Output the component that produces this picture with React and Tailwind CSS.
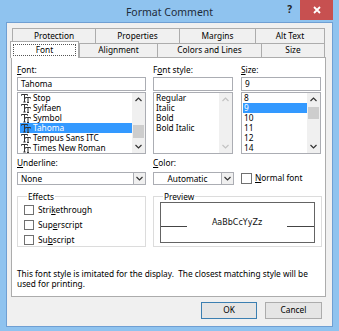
import React from "react";

const TT = () => (
  <svg width="10" height="9" viewBox="0 0 10 9" className="shrink-0">
    <path d="M0.5 0.5h6M0.5 0.5v1.2M6.5 0.5v1.2M3.5 0.5v7.5M2.3 8h2.4" stroke="#333" strokeWidth="1" fill="none" />
    <path d="M4.5 3.5h5M4.5 3.5v1M9.5 3.5v1M7 3.5v5M6 8.5h2" stroke="#333" strokeWidth="1" fill="none" />
  </svg>
);

const Chev = ({ up, color = "#333" }) => (
  <svg width="7" height="5" viewBox="0 0 7 5">
    <path d={up ? "M0.5 4L3.5 1L6.5 4" : "M0.5 1L3.5 4L6.5 1"} stroke={color} strokeWidth="1.2" fill="none" />
  </svg>
);

const Scroll = ({ thumbTop, thumbH, disabled }) => (
  <div className="w-[13px] h-full bg-[#f0f0f0] flex flex-col items-center">
    <div className="h-[11px] w-full flex items-center justify-center mt-[1px]">
      <Chev up color={disabled ? "#c2c2c2" : "#333"} />
    </div>
    {thumbH ? (
      <div className="w-full flex-1 flex flex-col">
        <div style={{ height: thumbTop }} />
        <div className="w-[11px] mx-auto bg-[#cdcdcd]" style={{ height: thumbH }} />
      </div>
    ) : (
      <div className="flex-1" />
    )}
    <div className="h-[11px] w-full flex items-center justify-center mb-[1px]">
      <Chev color={disabled ? "#c2c2c2" : "#333"} />
    </div>
  </div>
);

const Label = ({ pre, u, post }) => (
  <div className="h-[12px] leading-[12px] text-[#000]">
    {pre}
    <span className="underline underline-offset-[1px]">{u}</span>
    {post}
  </div>
);

const Tab = ({ children, w, last }) => (
  <div
    className={`h-full flex items-center justify-center bg-[#f0f0f0] border-t border-l border-[#acacac] ${last ? "border-r" : ""}`}
    style={{ width: w }}
  >
    {children}
  </div>
);

const Check = ({ pre, u, post }) => (
  <div className="flex items-center h-[10px] gap-[4px]">
    <div className="w-[10px] h-[10px] border border-[#707070] bg-white shrink-0" />
    <span className="leading-[10px]">
      {pre}
      <span className="underline underline-offset-[1px]">{u}</span>
      {post}
    </span>
  </div>
);

export default function App() {
  const fonts = ["Stop", "Sylfaen", "Symbol", "Tahoma", "Tempus Sans ITC", "Times New Roman"];
  const styles = ["Regular", "Italic", "Bold", "Bold Italic"];
  const sizes = ["8", "9", "10", "11", "12", "14"];
  return (
    <div className="w-[339px] h-[331px] bg-[#8fc3ef] flex flex-col overflow-hidden font-['Noto_Sans',sans-serif] text-[8.3px] text-black">
      {/* title bar */}
      <div className="h-[22px] grid grid-cols-[1fr_auto_1fr] shrink-0">
        <div />
        <div className="text-[10.5px] text-[#1e2b3a] leading-[22px] pt-[1px]">Format Comment</div>
        <div className="flex justify-end items-start pr-[6px]">
          <div className="text-[10px] font-bold text-[#222] mt-[2px] mr-[8px] leading-[14px]">?</div>
          <div className="w-[33px] h-[20px] bg-[#c75050] flex items-center justify-center">
            <svg width="8" height="8" viewBox="0 0 8 8">
              <path d="M1 1L7 7M7 1L1 7" stroke="#fff" strokeWidth="1.8" />
            </svg>
          </div>
        </div>
      </div>
      {/* content */}
      <div className="mx-[6px] h-[305px] border border-[#6f9fd3] bg-[#f0f0f0] pl-[4px] pr-[6px] pt-[5px] flex flex-col">
        {/* tabs */}
        <div className="mx-[1px] h-[15px] flex">
          <Tab w={83}>Protection</Tab>
          <Tab w={84}>Properties</Tab>
          <Tab w={76}>Margins</Tab>
          <Tab w={70} last>Alt Text</Tab>
        </div>
        <div className="mx-[1px] h-[14px] flex">
          <div className="relative z-10 -ml-[2px] -mt-[2px] w-[69px] h-[17px] bg-white border border-b-0 border-[#acacac] flex items-center justify-center p-[2px]">
            <div className="w-full h-full border border-dotted border-[#555] flex items-center justify-center">Font</div>
          </div>
          <Tab w={78}>Alignment</Tab>
          <Tab w={104}>Colors and Lines</Tab>
          <Tab w={64} last>Size</Tab>
        </div>
        {/* panel */}
        <div className="h-[240px] bg-white border border-[#acacac] pl-[5px] pr-[3px] pt-[6px] flex flex-col">
          <div className="grid grid-cols-[129px_80px_81px] gap-x-[7px]">
            {/* col1 */}
            <div className="flex flex-col">
              <Label u="F" post="ont:" />
              <div className="mt-[1px] h-[14px] border border-[#abadb3] pl-[3px] leading-[12px]">Tahoma</div>
              <div className="mt-[1px] h-[62px] border border-[#abadb3] flex">
                <div className="flex-1 pt-[0px] pl-[2px]">
                  {fonts.map((f) => (
                    <div
                      key={f}
                      className={`h-[10px] flex items-center gap-[2px] pl-[1px] ${f === "Tahoma" ? "bg-[#3399ff] text-white" : ""}`}
                    >
                      <TT />
                      <span className="leading-[10px]">{f}</span>
                    </div>
                  ))}
                </div>
                <Scroll thumbTop={20} thumbH={13} />
              </div>
            </div>
            {/* col2 */}
            <div className="flex flex-col">
              <Label pre="F" u="o" post="nt style:" />
              <div className="mt-[1px] h-[14px] border border-[#abadb3]" />
              <div className="mt-[1px] h-[62px] border border-[#abadb3] flex">
                <div className="flex-1 pl-[2px]">
                  {styles.map((s) => (
                    <div key={s} className="h-[10px] leading-[10px]">{s}</div>
                  ))}
                </div>
                <Scroll disabled />
              </div>
            </div>
            {/* col3 */}
            <div className="flex flex-col ml-[1px]">
              <Label u="S" post="ize:" />
              <div className="mt-[1px] h-[14px] border border-[#abadb3] pl-[3px] leading-[12px]">9</div>
              <div className="mt-[1px] h-[62px] border border-[#abadb3] flex">
                <div className="flex-1 pl-[1px]">
                  {sizes.map((s) => (
                    <div
                      key={s}
                      className={`h-[10px] leading-[10px] pl-[1px] ${s === "9" ? "bg-[#3399ff] text-white" : ""}`}
                    >
                      {s}
                    </div>
                  ))}
                </div>
                <Scroll thumbTop={2} thumbH={12} />
              </div>
            </div>
          </div>

          {/* second row */}
          <div className="grid grid-cols-[129px_169px] gap-x-[7px] mt-[3px]">
            <div className="flex flex-col">
              <Label u="U" post="nderline:" />
              <div className="mt-[3px] h-[13px] border border-[#abadb3] flex">
                <div className="flex-1 pl-[3px] leading-[11px]">None</div>
                <div className="w-[12px] border-l border-[#abadb3] bg-[#f0f0f0] flex items-center justify-center">
                  <Chev />
                </div>
              </div>
              <fieldset className="mt-[7px] h-[55px] border border-[#dcdcdc] px-[6px]">
                <legend className="ml-[3px] px-[1px] leading-[9px]">Effects</legend>
                <div className="flex flex-col gap-[5px] pt-[4px] pl-[0px]">
                  <Check pre="Stri" u="k" post="ethrough" />
                  <Check pre="Sup" u="e" post="rscript" />
                  <Check pre="Su" u="b" post="script" />
                </div>
              </fieldset>
            </div>
            <div className="flex flex-col">
              <Label u="C" post="olor:" />
              <div className="mt-[3px] h-[13px] flex items-center">
                <div className="w-[81px] h-[13px] border border-[#abadb3] flex">
                  <div className="flex-1 text-center leading-[11px]">Automatic</div>
                  <div className="w-[12px] border-l border-[#abadb3] bg-[#f0f0f0] flex items-center justify-center">
                    <Chev />
                  </div>
                </div>
                <div className="ml-[7px] flex items-center gap-[3px]">
                  <div className="w-[11px] h-[11px] border border-[#707070] bg-white" />
                  <span>
                    <span className="underline underline-offset-[1px]">N</span>ormal font
                  </span>
                </div>
              </div>
              <fieldset className="mt-[7px] h-[55px] border border-[#dcdcdc] px-[6px]">
                <legend className="ml-[3px] px-[1px] leading-[9px]">Preview</legend>
                <div className="mt-[1px] h-[41px] border border-[#646464] flex items-center">
                  <div className="w-[26px] h-[1px] bg-[#444] mt-[7px]" />
                  <div className="flex-1 text-center font-['DejaVu_Sans',sans-serif] text-[8px] text-[#111]">AaBbCcYyZz</div>
                  <div className="w-[27px] h-[1px] bg-[#444] mt-[7px]" />
                </div>
              </fieldset>
            </div>
          </div>

          <div className="mt-[22px] leading-[10px] whitespace-pre text-[#000]">
            {"This font style is imitated for the display.  The closest matching style will be\nused for printing."}
          </div>
        </div>
        {/* buttons */}
        <div className="flex justify-end gap-[8px] mt-[5px] pr-[4px]">
          <div className="w-[56px] h-[17px] border border-[#3c7fb1] bg-[#e5e5e5] flex items-center justify-center">OK</div>
          <div className="w-[57px] h-[17px] border border-[#acacac] bg-[#e5e5e5] flex items-center justify-center">Cancel</div>
        </div>
      </div>
    </div>
  );
}
